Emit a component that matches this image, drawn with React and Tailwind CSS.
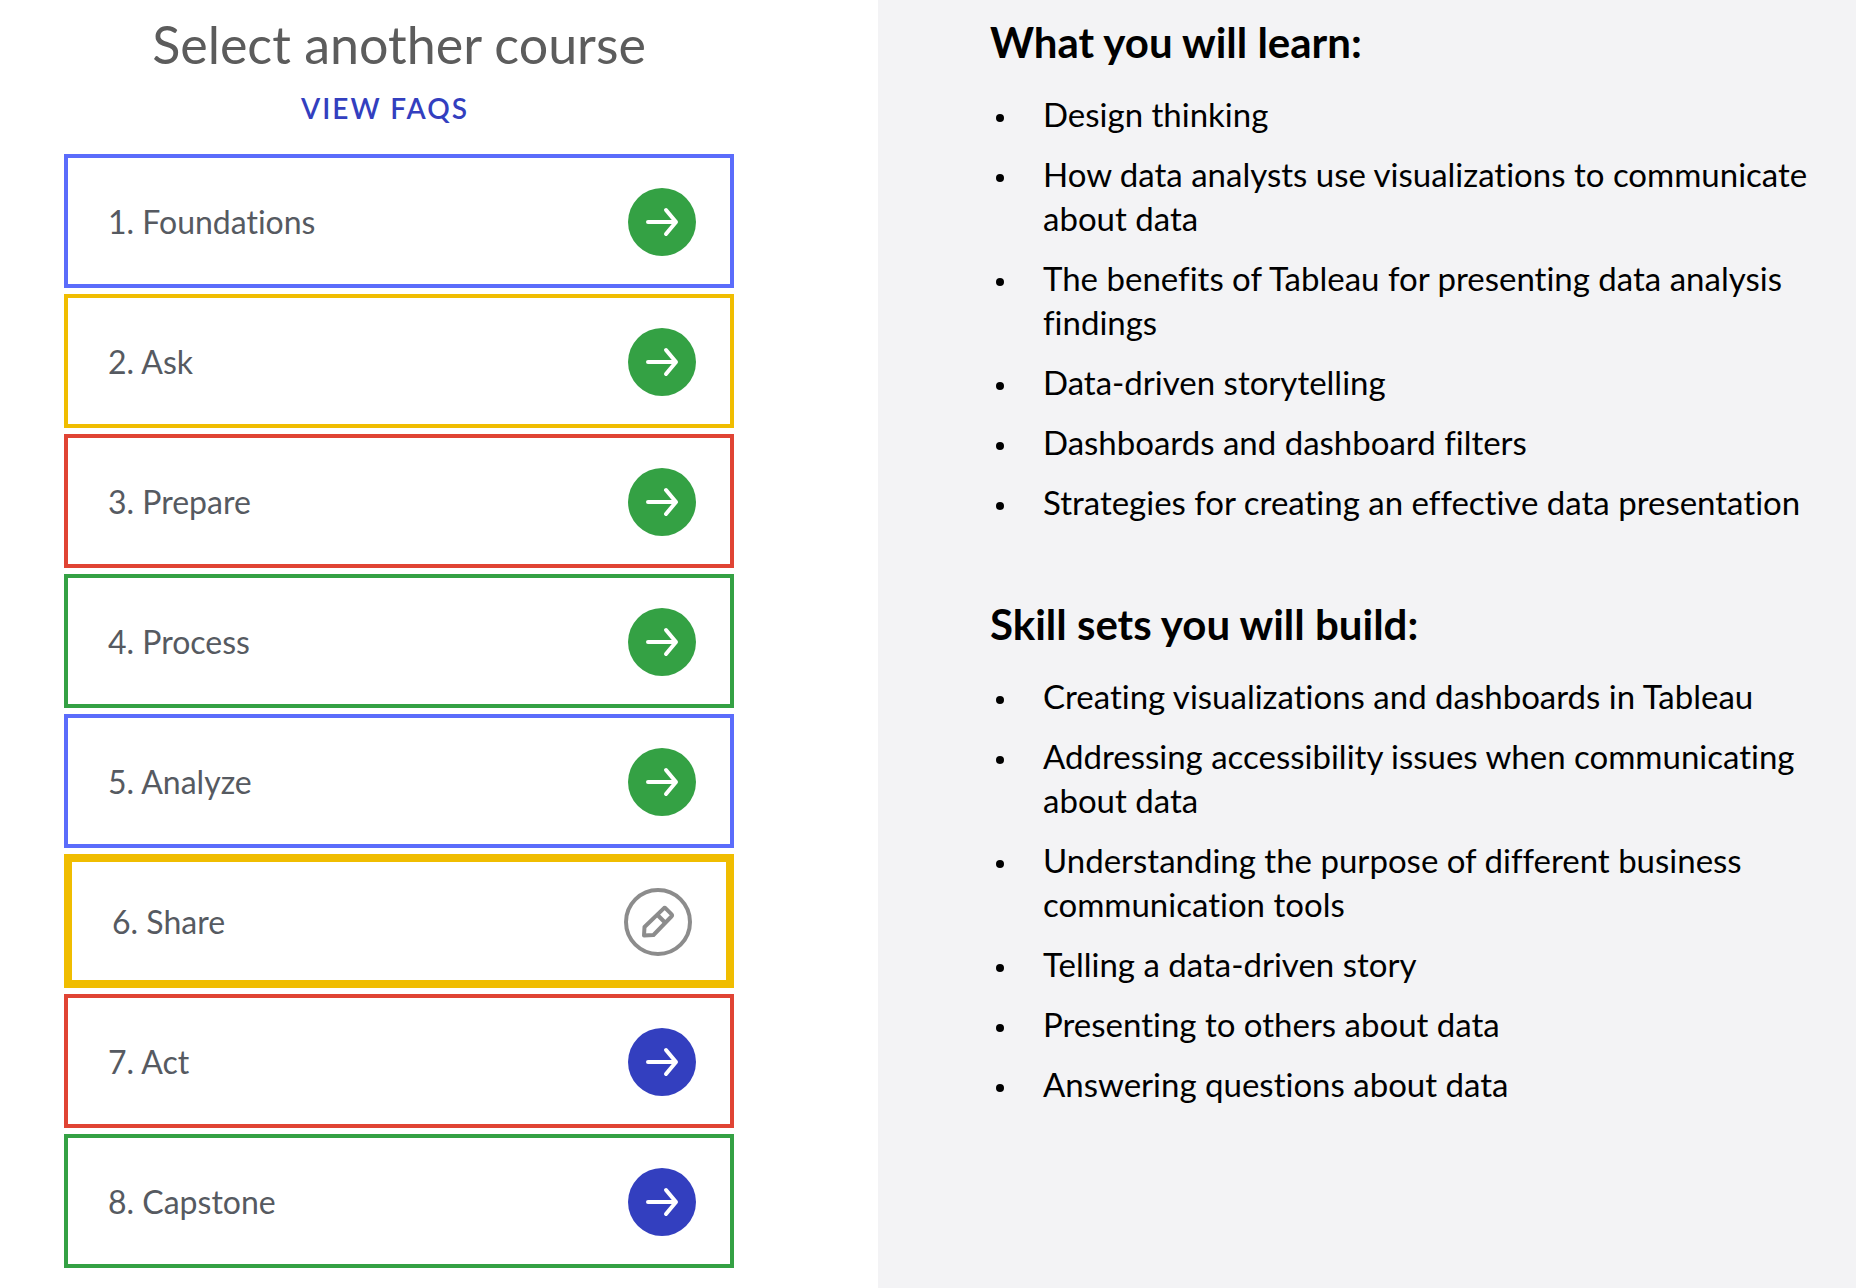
const courses = [
  { label: "1. Foundations", border: "border-4 border-[#5b6cfb]", status: "done" },
  { label: "2. Ask", border: "border-4 border-[#f0bd00]", status: "done" },
  { label: "3. Prepare", border: "border-4 border-[#e04434]", status: "done" },
  { label: "4. Process", border: "border-4 border-[#34a144]", status: "done" },
  { label: "5. Analyze", border: "border-4 border-[#5b6cfb]", status: "done" },
  { label: "6. Share", border: "border-8 border-[#f0bd00]", status: "current" },
  { label: "7. Act", border: "border-4 border-[#e04434]", status: "next" },
  { label: "8. Capstone", border: "border-4 border-[#34a144]", status: "next" },
];

const sections = [
  {
    title: "What you will learn:",
    items: [
      "Design thinking",
      "How data analysts use visualizations to communicate about data",
      "The benefits of Tableau for presenting data analysis findings",
      "Data-driven storytelling",
      "Dashboards and dashboard filters",
      "Strategies for creating an effective data presentation",
    ],
  },
  {
    title: "Skill sets you will build:",
    items: [
      "Creating visualizations and dashboards in Tableau",
      "Addressing accessibility issues when communicating about data",
      "Understanding the purpose of different business communication tools",
      "Telling a data-driven story",
      "Presenting to others about data",
      "Answering questions about data",
    ],
  },
];

function ArrowIcon({ color }) {
  return (
    <svg viewBox="0 0 68 68" className={`size-17 shrink-0 ${color}`} fill="none" aria-hidden="true">
      <circle cx="34" cy="34" r="34" fill="currentColor" />
      <path d="M20 34H48M38 22L48 34L38 46" stroke="#fff" strokeWidth="4" strokeLinecap="round" strokeLinejoin="round" />
    </svg>
  );
}

function PencilIcon() {
  return (
    <svg viewBox="0 0 68 68" className="size-17 shrink-0 text-[#8c8c8c]" fill="none" stroke="currentColor" strokeWidth="4" strokeLinejoin="round" aria-hidden="true">
      <circle cx="34" cy="34" r="32" />
      <path d="M20 47.5L20.5 39L39.5 20.6Q40.7 19.4 41.9 20.6L47.4 26.1Q48.6 27.3 47.4 28.5L29.5 47Z" />
      <path d="M33.5 27L41 34.5" />
    </svg>
  );
}

function CourseCard({ label, border, status }) {
  return (
    <button
      type="button"
      className={`flex h-[134px] w-full items-center justify-between bg-white pt-0.5 pl-10 pr-[34px] text-left text-[32px] leading-10 text-[#565a61] ${border}`}
    >
      <span>{label}</span>
      {status === "done" && <ArrowIcon color="text-[#34a144]" />}
      {status === "current" && <PencilIcon />}
      {status === "next" && <ArrowIcon color="text-[#333fbf]" />}
    </button>
  );
}

export default function App() {
  return (
    <main className="grid min-h-screen grid-cols-[439fr_489fr] bg-white font-['Lato',sans-serif] [font-variant-ligatures:none]">
      <nav className="flex flex-col pl-16 pr-36 pt-[14px] pb-5" aria-label="Courses">
        <h1 className="text-center text-[52px] leading-[60px] text-[#5c5c5c]">Select another course</h1>
        <a href="#faqs" className="mt-[14px] self-center pr-7 text-[28px] leading-10 font-semibold tracking-[2px] text-[#333fbf]">
          VIEW FAQS
        </a>
        <ul className="mt-[26px] flex flex-col gap-1.5">
          {courses.map((course) => (
            <li key={course.label}>
              <CourseCard {...course} />
            </li>
          ))}
        </ul>
      </nav>
      <div className="flex flex-col gap-[76px] bg-[#f3f3f5] pl-28 pr-11 pt-[18px] text-black">
        {sections.map((section) => (
          <section key={section.title}>
            <h2 className="text-[42px] leading-[48px] font-bold">{section.title}</h2>
            <ul className="mt-[26px] flex flex-col gap-4 text-[33px] leading-[44px]">
              {section.items.map((item) => (
                <li key={item} className="flex">
                  <span className="mt-[22px] mr-[39px] ml-1.5 size-2 shrink-0 rounded-full bg-black" />
                  <span>{item}</span>
                </li>
              ))}
            </ul>
          </section>
        ))}
      </div>
    </main>
  );
}
